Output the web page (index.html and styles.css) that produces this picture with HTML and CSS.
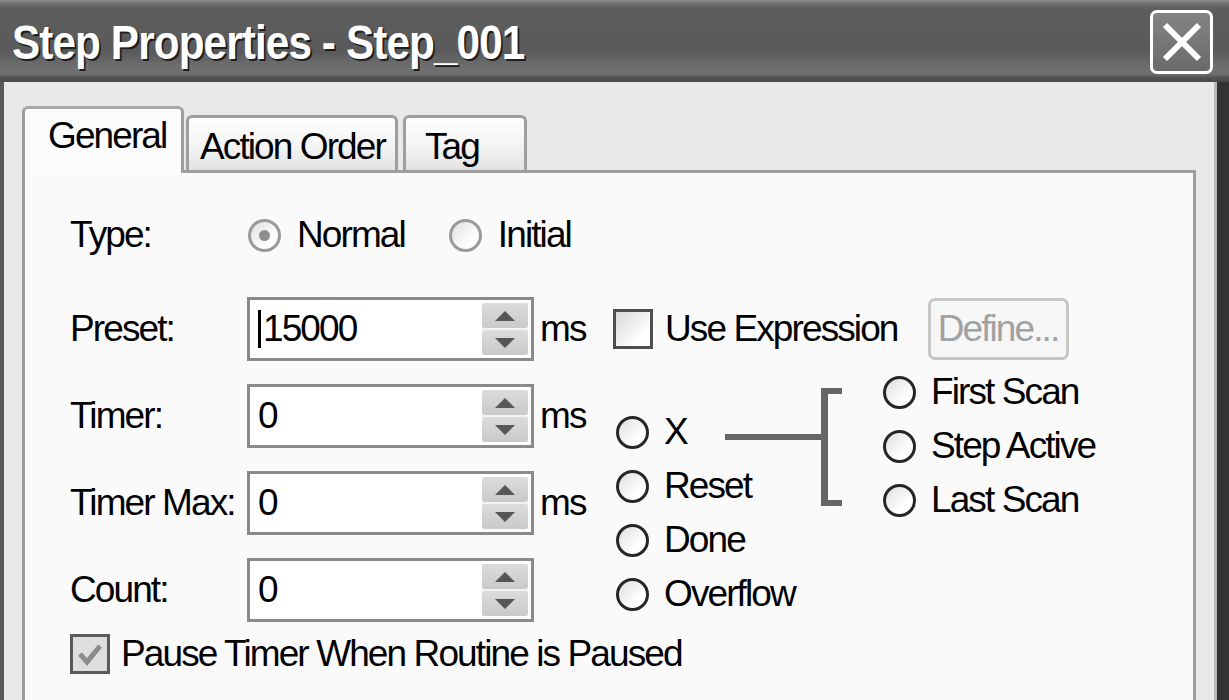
FILE: index.html
```html
<!DOCTYPE html>
<html>
<head>
<meta charset="utf-8">
<title>Step Properties - Step_001</title>
<link rel="stylesheet" href="styles.css">
</head>
<body>
<div class="window">
  <div class="titlebar">
    <span class="title">Step Properties - Step_001</span>
    <div class="close">
      <svg width="46" height="46" viewBox="0 0 46 46"><path d="M6 6 L40 40 M40 6 L6 40" stroke="#fff" stroke-width="6" fill="none"/></svg>
    </div>
  </div>
  <div class="frame">
    <div class="tabs">
      <div class="tab tab-active tab-general">General</div>
      <div class="tab tab-action">Action Order</div>
      <div class="tab tab-tag">Tag</div>
    </div>
    <div class="panel">
      <div class="type-row">
        <span class="label">Type:</span>
        <span class="radio radio-disabled radio-checked"></span>
        <span class="radio-text">Normal</span>
        <span class="radio radio-disabled radio-initial"></span>
        <span class="radio-text">Initial</span>
      </div>
      <div class="main-row">
        <div class="fields">
          <span class="label">Preset:</span>
          <div class="spinbox"><span class="value"><span class="caret"></span>15000</span><span class="spin"><span class="spin-up"><svg width="22" height="12" viewBox="0 0 22 12"><path d="M11 1 L21 11 L1 11 Z" fill="#565656"/></svg></span><span class="spin-down"><svg width="22" height="12" viewBox="0 0 22 12"><path d="M1 1 L21 1 L11 11 Z" fill="#565656"/></svg></span></span></div>
          <span class="unit">ms</span>

          <span class="label">Timer:</span>
          <div class="spinbox"><span class="value">0</span><span class="spin"><span class="spin-up"><svg width="22" height="12" viewBox="0 0 22 12"><path d="M11 1 L21 11 L1 11 Z" fill="#565656"/></svg></span><span class="spin-down"><svg width="22" height="12" viewBox="0 0 22 12"><path d="M1 1 L21 1 L11 11 Z" fill="#565656"/></svg></span></span></div>
          <span class="unit">ms</span>

          <span class="label">Timer Max:</span>
          <div class="spinbox"><span class="value">0</span><span class="spin"><span class="spin-up"><svg width="22" height="12" viewBox="0 0 22 12"><path d="M11 1 L21 11 L1 11 Z" fill="#565656"/></svg></span><span class="spin-down"><svg width="22" height="12" viewBox="0 0 22 12"><path d="M1 1 L21 1 L11 11 Z" fill="#565656"/></svg></span></span></div>
          <span class="unit">ms</span>

          <span class="label">Count:</span>
          <div class="spinbox"><span class="value">0</span><span class="spin"><span class="spin-up"><svg width="22" height="12" viewBox="0 0 22 12"><path d="M11 1 L21 11 L1 11 Z" fill="#565656"/></svg></span><span class="spin-down"><svg width="22" height="12" viewBox="0 0 22 12"><path d="M1 1 L21 1 L11 11 Z" fill="#565656"/></svg></span></span></div>
          <span class="unit"></span>
        </div>
        <div class="options">
          <div class="expr-row">
            <span class="checkbox"></span>
            <span class="expr-text">Use Expression</span>
            <span class="define">Define...</span>
          </div>
          <div class="diagram">
            <div class="col-left">
              <div class="opt"><span class="radio"></span><span>X</span></div>
              <div class="opt"><span class="radio"></span><span>Reset</span></div>
              <div class="opt"><span class="radio"></span><span>Done</span></div>
              <div class="opt"><span class="radio"></span><span>Overflow</span></div>
            </div>
            <div class="col-right">
              <div class="opt"><span class="radio"></span><span>First Scan</span></div>
              <div class="opt"><span class="radio"></span><span>Step Active</span></div>
              <div class="opt"><span class="radio"></span><span>Last Scan</span></div>
            </div>
            <svg class="connector" width="118" height="118" viewBox="0 0 118 118">
              <rect x="0" y="46" width="100" height="6" fill="#666"/>
              <rect x="96" y="0" width="7" height="118" fill="#666"/>
              <rect x="96" y="0" width="21" height="6" fill="#666"/>
              <rect x="96" y="112" width="21" height="6" fill="#666"/>
            </svg>
          </div>
        </div>
      </div>
      <div class="pause-row">
        <span class="checkbox checkbox-checked"><svg width="34" height="34" viewBox="0 0 34 34"><path d="M7 17 L14 25 L27 9" stroke="#8c8c8c" stroke-width="5" fill="none"/></svg></span>
        <span class="pause-text">Pause Timer When Routine is Paused</span>
      </div>
    </div>
  </div>
</div>
</body>
</html>
```
FILE: styles.css
```css
* { box-sizing: border-box; }
html, body { margin: 0; padding: 0; }
body {
  width: 1229px;
  height: 700px;
  overflow: hidden;
  background: #e9e9e9;
  font-family: "Liberation Sans", Arial, sans-serif;
  font-size: 37px;
  letter-spacing: -1.9px;
  color: #000;
}
.window {
  width: 1229px;
  height: 700px;
  display: flex;
  flex-direction: column;
}
.titlebar {
  height: 82px;
  flex: none;
  display: flex;
  align-items: center;
  justify-content: space-between;
  padding: 2px 16px 0 12px;
  background: linear-gradient(to bottom, #8e8e8e 0, #6c6c6c 4px, #5d5d5d 10px, #5a5a5a 52px, #6e6e6e 66px, #707070 74px, #505050 78px, #4a4a4a 82px);
}
.title {
  color: #fff;
  font-weight: bold;
  font-size: 48px;
  letter-spacing: -1px;
  transform: scaleX(0.88);
  transform-origin: left center;
  text-shadow: 2px 2px 0 #1e1e1e;
  white-space: nowrap;
}
.close {
  width: 63px;
  height: 64px;
  border: 3px solid #fff;
  border-radius: 7px;
  background: linear-gradient(to bottom, #848484, #6a6a6a);
  display: flex;
  align-items: center;
  justify-content: center;
}
.frame {
  flex: 1;
  display: flex;
  flex-direction: column;
  background: #e9e9e9;
  border-left: 4px solid #585858;
  border-right: 12px solid #333;
  box-shadow: inset -3px 0 0 #b8b8b8;
  padding: 24px 21px 0 18px;
}
.tabs {
  display: flex;
  align-items: flex-end;
  height: 67px;
  margin-bottom: -3px;
  position: relative;
  z-index: 1;
}
.tab {
  border: 3px solid #9e9e9e;
  border-bottom: none;
  border-radius: 6px 6px 0 0;
  padding-top: 8px;
  white-space: nowrap;
}
.tab-active {
  width: 162px;
  height: 67px;
  background: #fbfbfb;
  padding-left: 23px;
  padding-top: 6px;
  border-top-color: #a8a8a8;
}
.tab-action {
  width: 212px;
  height: 55px;
  margin-left: 2px;
  margin-bottom: 3px;
  padding-left: 11px;
  background: linear-gradient(to bottom, #fefefe, #f2f2f2 60%, #e2e2e2);
}
.tab-tag {
  width: 124px;
  height: 55px;
  margin-left: 5px;
  margin-bottom: 3px;
  padding-left: 19px;
  background: linear-gradient(to bottom, #fefefe, #f2f2f2 60%, #e2e2e2);
}
.panel {
  flex: 1;
  border: 3px solid #9e9e9e;
  border-bottom: none;
  background: #fafafa;
  padding: 42px 0 0 45px;
  display: flex;
  flex-direction: column;
}
.type-row {
  height: 40px;
  display: flex;
  align-items: center;
}
.type-row .label { width: 178px; }
.radio {
  width: 33px;
  height: 33px;
  flex: none;
  border-radius: 50%;
  border: 3px solid #262626;
  background: linear-gradient(135deg, #dedede, #ffffff 70%);
  display: inline-flex;
  align-items: center;
  justify-content: center;
}
.radio-disabled { border-color: #9a9a9a; }
.radio-checked::after {
  content: "";
  width: 11px;
  height: 11px;
  border-radius: 50%;
  background: #8e8e8e;
}
.radio-text { margin-left: 16px; }
.radio-initial { margin-left: 44px; }
.main-row {
  display: flex;
  margin-top: 42px;
}
.fields {
  display: grid;
  grid-template-columns: 171px 287px 40px;
  grid-auto-rows: 64px;
  column-gap: 6px;
  row-gap: 23px;
  align-items: center;
}
.spinbox {
  height: 64px;
  border: 3px solid #8a8a8a;
  background: #fff;
  display: flex;
  align-items: center;
  padding: 0 3px 0 8px;
}
.value {
  flex: 1;
  display: flex;
  align-items: center;
}
.caret {
  width: 3px;
  height: 38px;
  background: #000;
  margin-right: 2px;
}
.spin {
  width: 46px;
  height: 52px;
  display: flex;
  flex-direction: column;
  gap: 2px;
  background: #f2f2f2;
}
.spin-up, .spin-down {
  flex: 1;
  border-radius: 3px;
  background: linear-gradient(to bottom, #dcdcdc, #c9c9c9);
  display: flex;
  align-items: center;
  justify-content: center;
}
.options {
  margin-left: 33px;
  display: flex;
  flex-direction: column;
}
.expr-row {
  height: 64px;
  display: flex;
  align-items: center;
}
.checkbox {
  width: 40px;
  height: 40px;
  flex: none;
  border: 3px solid #4e4e4e;
  background: linear-gradient(135deg, #d8d8d8, #ffffff 75%);
  display: inline-flex;
  align-items: center;
  justify-content: center;
}
.expr-text { margin-left: 12px; }
.define {
  margin-left: 30px;
  width: 141px;
  height: 62px;
  border: 3px solid #c6c6c6;
  border-radius: 7px;
  background: #f6f6f6;
  color: #a2a2a2;
  display: flex;
  align-items: center;
  justify-content: center;
}
.diagram {
  position: relative;
  display: flex;
  margin-top: 4px;
  padding-left: 3px;
}
.col-left {
  width: 267px;
  margin-top: 40px;
}
.opt {
  height: 54px;
  display: flex;
  align-items: center;
  gap: 15px;
}
.connector {
  position: absolute;
  left: 112px;
  top: 23px;
}
.pause-row {
  display: flex;
  align-items: center;
  margin-top: 12px;
  height: 40px;
}
.checkbox-checked {
  background: #dedede;
  border-color: #5a5a5a;
}
.pause-text { margin-left: 11px; }
```
